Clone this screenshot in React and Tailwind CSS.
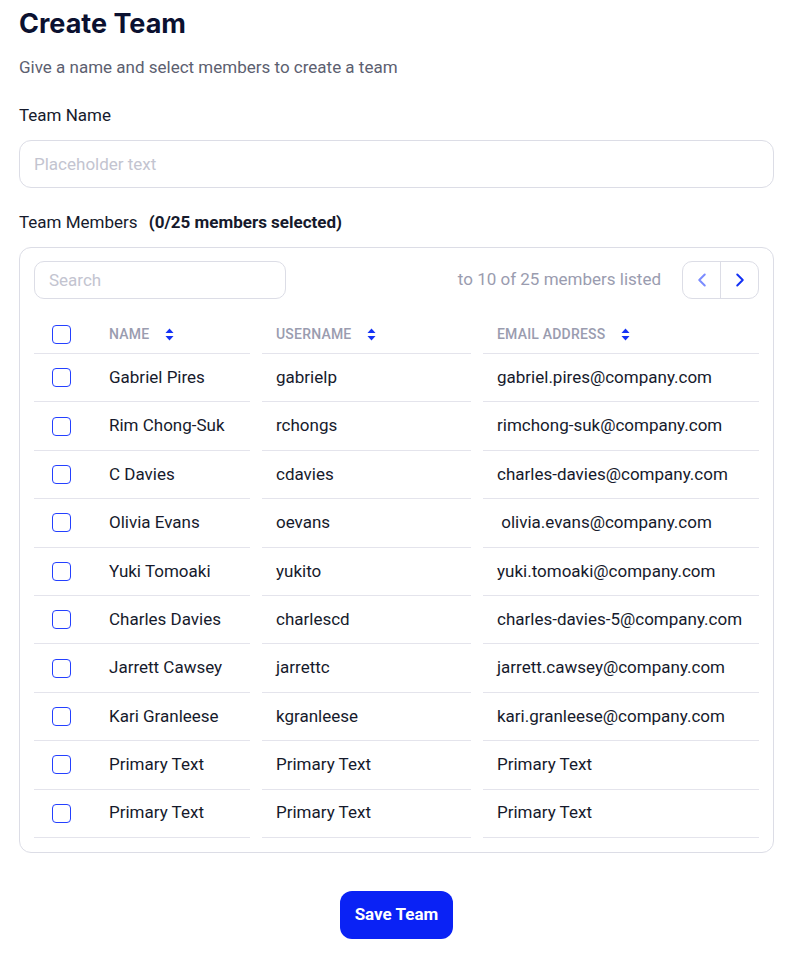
import { ChevronLeft, ChevronRight } from 'lucide-react';

const members = [
  ['Gabriel Pires', 'gabrielp', 'gabriel.pires@company.com'],
  ['Rim Chong-Suk', 'rchongs', 'rimchong-suk@company.com'],
  ['C Davies', 'cdavies', 'charles-davies@company.com'],
  ['Olivia Evans', 'oevans', '\u00a0olivia.evans@company.com'],
  ['Yuki Tomoaki', 'yukito', 'yuki.tomoaki@company.com'],
  ['Charles Davies', 'charlescd', 'charles-davies-5@company.com'],
  ['Jarrett Cawsey', 'jarrettc', 'jarrett.cawsey@company.com'],
  ['Kari Granleese', 'kgranleese', 'kari.granleese@company.com'],
  ['Primary Text', 'Primary Text', 'Primary Text'],
  ['Primary Text', 'Primary Text', 'Primary Text'],
];

function SortIcon() {
  return (
    <svg width="9" height="13" viewBox="0 0 9 13" className="ml-[16px]">
      <path d="M4.5 0.5 L8.5 5 H0.5 Z" fill="#1432f5" />
      <path d="M4.5 12.5 L8.5 8 H0.5 Z" fill="#1432f5" />
    </svg>
  );
}

function Box() {
  return <span className="block h-[19px] w-[19px] rounded-[4px] border-[1.6px] border-[#2440ff] bg-white" />;
}

export default function App() {
  return (
    <div className="min-h-screen bg-white pl-[19px] pr-[18px] pt-[6px] text-[#161a2c]" style={{ fontFamily: 'Roboto, "Liberation Sans", sans-serif' }}>
      <h1 className="text-[27px] font-bold leading-9 text-[#0b1130]" style={{ fontFamily: 'Inter, Roboto, sans-serif' }}>Create Team</h1>
      <p className="mt-[15px] text-[17px] leading-5 text-[#5c6070]">Give a name and select members to create a team</p>
      <p className="mt-[28px] text-[17px] leading-5 text-[#161a2c]">Team Name</p>
      <input
        className="mt-[15px] h-[48px] w-full rounded-[12px] border border-[#dcdde6] px-[14px] text-[17px] outline-none placeholder:text-[#c3c4d0]"
        placeholder="Placeholder text"
      />
      <p className="mt-[24px] text-[17px] leading-5">
        Team Members <span className="ml-[7px] font-bold">(0/25 members selected)</span>
      </p>
      <div className="mt-[15px] rounded-[12px] border border-[#dcdde6] px-[14px] pb-[14px] pt-[13px]">
        <div className="flex items-center justify-between">
          <input
            className="h-[38px] w-[252px] rounded-[10px] border border-[#dcdde6] px-[14px] text-[17px] outline-none placeholder:text-[#c3c4d0]"
            placeholder="Search"
          />
          <div className="flex items-center">
            <span className="text-[17px] text-[#9a9caf]">to 10 of 25 members listed</span>
            <div className="ml-[21px] flex h-[38px] w-[77px] overflow-hidden rounded-[10px] border border-[#dcdde6]">
              <button className="flex flex-1 items-center justify-center border-r border-[#dcdde6] text-[#7b8cff]"><ChevronLeft size={22} strokeWidth={2.2} /></button>
              <button className="flex flex-1 items-center justify-center text-[#1432f5]"><ChevronRight size={22} strokeWidth={2.2} /></button>
            </div>
          </div>
        </div>
        <div className="mt-[17px] grid grid-cols-[216px_209px_1fr] gap-x-3">
          <div className="flex h-[38px] items-center border-b-[1.5px] border-[#e4e4ec]">
            <span className="ml-[18px]"><Box /></span>
            <span className="ml-[38px] flex items-center text-[14px] font-medium tracking-[0.2px] text-[#9a9caf]">NAME<SortIcon /></span>
          </div>
          <div className="flex h-[38px] items-center border-b-[1.5px] border-[#e4e4ec] pl-[14px] text-[14px] font-medium tracking-[0.2px] text-[#9a9caf]">USERNAME<SortIcon /></div>
          <div className="flex h-[38px] items-center border-b-[1.5px] border-[#e4e4ec] pl-[14px] text-[14px] font-medium tracking-[0.2px] text-[#9a9caf]">EMAIL ADDRESS<SortIcon /></div>
          {members.map(([name, user, email], i) => (
            <div key={i} className="contents">
              <div className="flex h-[48.4px] items-center border-b-[1.5px] border-[#e4e4ec]">
                <span className="ml-[18px]"><Box /></span>
                <span className="ml-[38px] text-[17px]">{name}</span>
              </div>
              <div className="flex h-[48.4px] items-center border-b-[1.5px] border-[#e4e4ec] pl-[14px] text-[17px]">{user}</div>
              <div className="flex h-[48.4px] items-center whitespace-pre border-b-[1.5px] border-[#e4e4ec] pl-[14px] text-[17px]">{email}</div>
            </div>
          ))}
        </div>
      </div>
      <div className="mt-[38px] flex justify-center">
        <button className="h-[48px] w-[113px] rounded-[12px] bg-[#0a22f5] text-[17px] font-bold text-white">Save Team</button>
      </div>
    </div>
  );
}
